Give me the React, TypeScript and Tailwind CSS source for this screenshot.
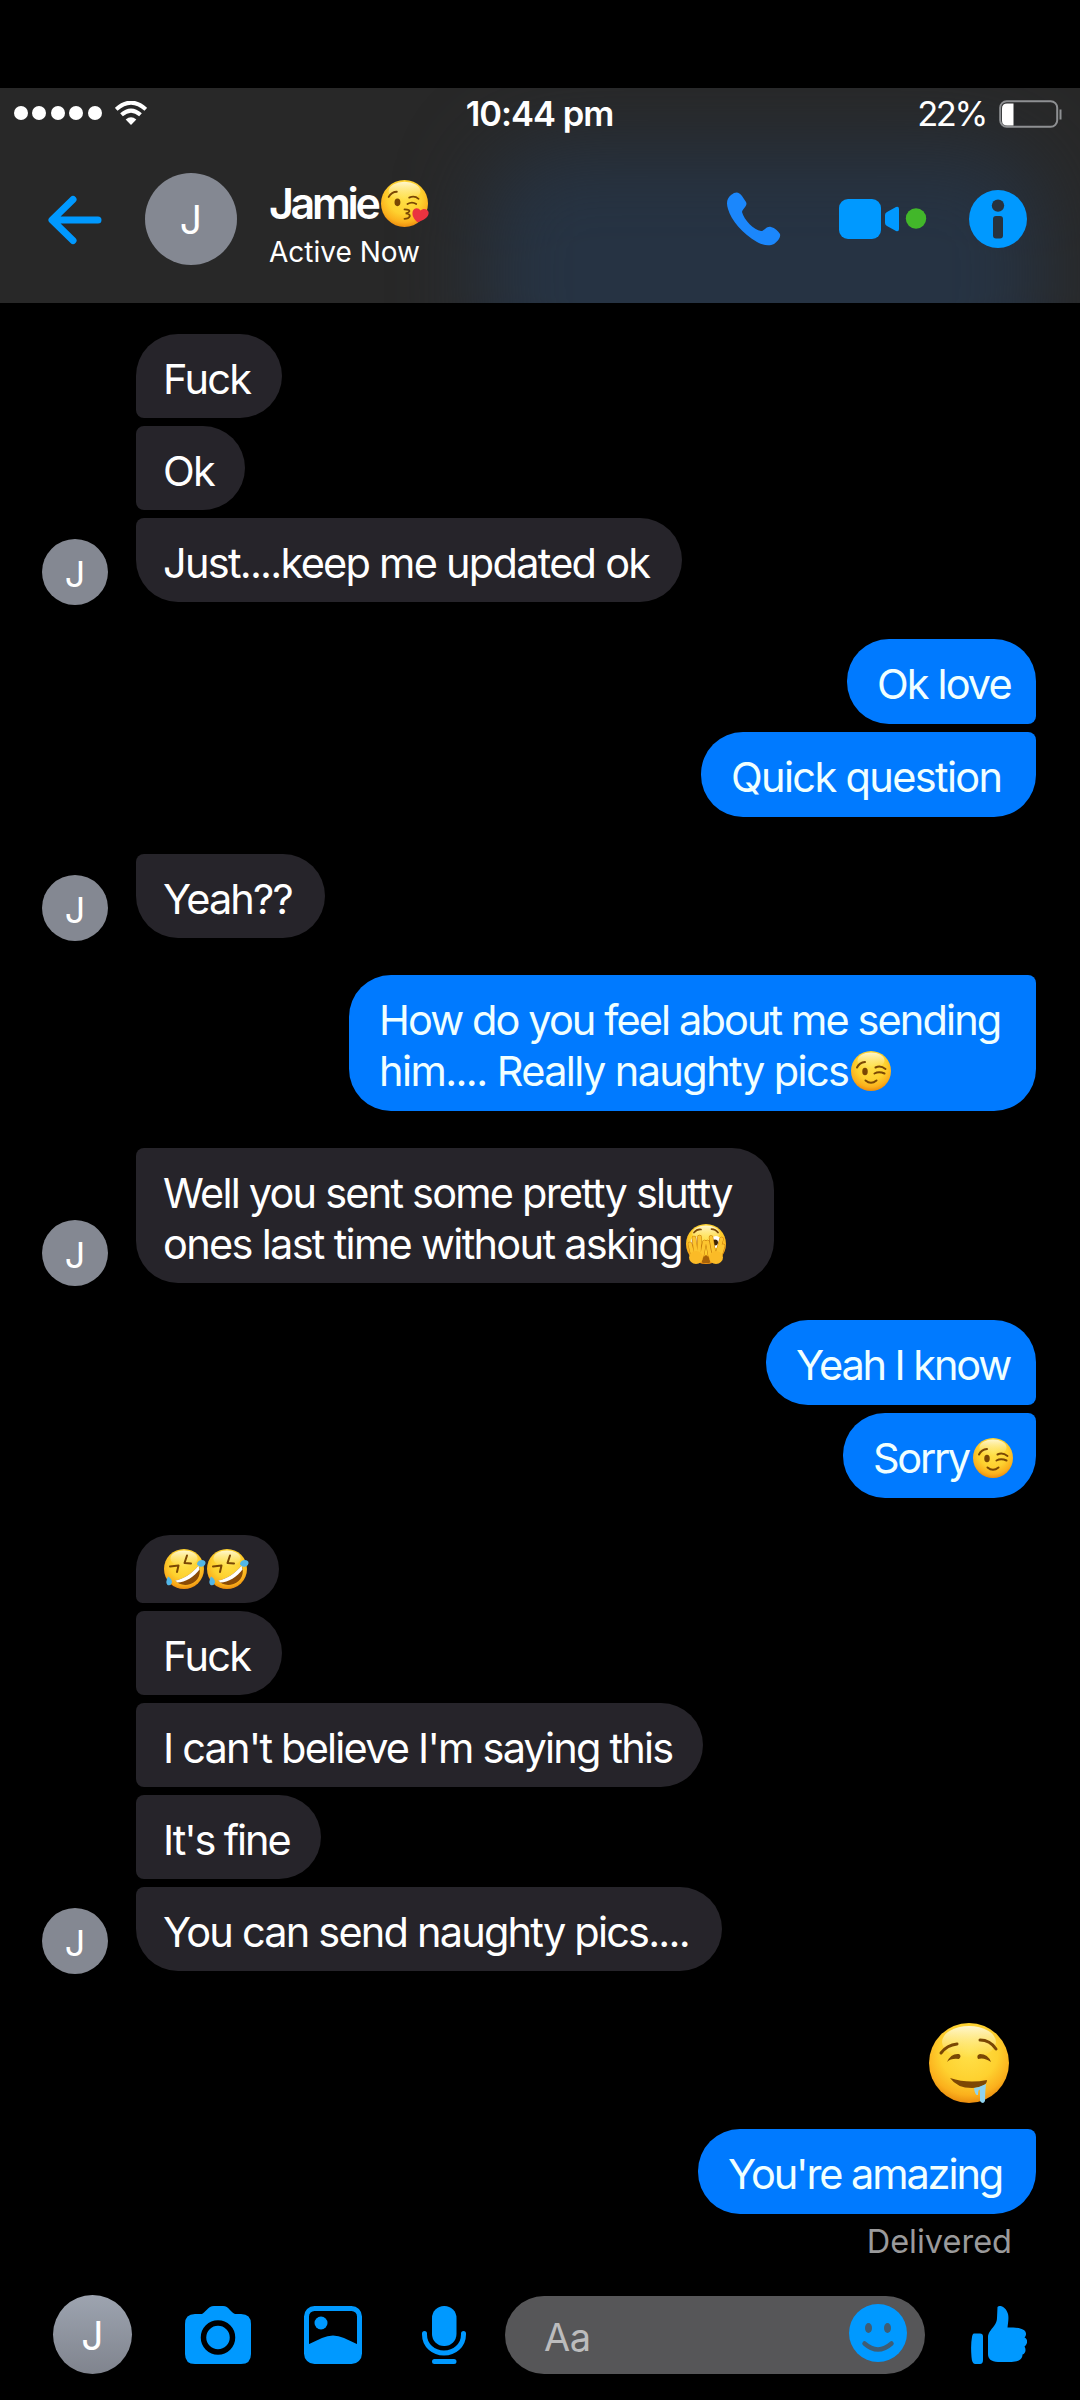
import type { ReactNode } from "react";
import clsx from "clsx";

type EmojiName = "kiss" | "wink" | "peek" | "rofl" | "drool";

interface Message {
  text: ReactNode;
  // width and tracking of the bubble
  size: string;
  first?: boolean;
  last?: boolean;
  pad?: string;
}

interface Group {
  from: "them" | "me";
  className: string;
  messages: Message[];
}

function Emoji({ name, className }: { name: EmojiName; className: string }) {
  return (
    <svg viewBox="0 0 80 80" role="img" aria-label={name} className={clsx("inline-block overflow-visible", className)}>
      <defs>
        <radialGradient id="face" cx="0.5" cy="0.36" r="0.66">
          <stop offset="0" stopColor="#ffe14a" />
          <stop offset="0.55" stopColor="#fed12f" />
          <stop offset="0.82" stopColor="#fbb01c" />
          <stop offset="1" stopColor="#e8860c" />
        </radialGradient>
        <linearGradient id="shine" x1="0" y1="0" x2="0" y2="1">
          <stop offset="0" stopColor="#fffbe0" stopOpacity="0.9" />
          <stop offset="1" stopColor="#fff3a0" stopOpacity="0" />
        </linearGradient>
      </defs>
      <circle cx="40" cy="40" r="40" fill="url(#face)" />
      <ellipse cx="40" cy="19" rx="27" ry="16" fill="url(#shine)" />
      {name === "wink" && (
        <g fill="none" stroke="#7a4704" strokeWidth="4" strokeLinecap="round">
          <path d="M12 33q5-10 16-11M49 33q10-5 20 3M47 45q9-5 20 0" />
          <path d="M29 59q11 9 22 0" />
          <ellipse cx="28" cy="41" rx="3.5" ry="5.5" fill="#7a4704" />
        </g>
      )}
      {name === "kiss" && (
        <>
          <g fill="none" stroke="#7a4704" strokeWidth="3" strokeLinecap="round">
            <path d="M13 29q5-9 14-9M48 30q9-4 16 2M45 41q8-5 15 0" />
            <path d="M40 50q10 0 8 4-1 2-6 3 8 1 7 5-2 4-9 4" />
            <ellipse cx="28" cy="38" rx="3.5" ry="5" fill="#7a4704" />
          </g>
          <path d="M62 72C56 66 52 60 54 53c2-6 10-7 13-1 5-5 13-3 14 3 1 8-8 14-19 17z" fill="#ea3340" />
        </>
      )}
      {name === "rofl" && (
        <>
          <g fill="none" stroke="#7a4704" strokeWidth="4" strokeLinejoin="round" strokeLinecap="round">
            <path d="M12 35l17-2-3 13M46 13l-5 15 13 1" />
          </g>
          <path d="M22 63C38 61 58 48 69 33c7 14 0 32-16 37-12 4-24 1-31-7z" fill="#8a4b06" />
          <path d="M22 63C38 61 58 48 69 33l2 8C61 55 42 67 27 67z" fill="#fff" />
          <path d="M66 31q0-8 9-9 9 0 8 7-3 8-12 6zM8 55q8 4 8 12-2 7-9 5-5-5 1-17z" fill="#53b7e8" />
        </>
      )}
      {name === "drool" && (
        <>
          <g fill="none" stroke="#7a4704" strokeWidth="3" strokeLinecap="round">
            <path d="M12 30q6-8 16-9M51 17q10 0 16 9" />
          </g>
          <path d="M18 39q4-9 12-8 3 2 0 5-8-1-12 3zM49 36q-2-4 2-5 8 0 11 8-7-5-13-3z" fill="#7a4704" />
          <path d="M21 55q18 6 37 2 0 7-15 8-15 0-22-10z" fill="#7d4804" />
          <path d="M45 65q6-1 12-4-1 8-1 17-2 4-5 0v-11q-2-1-2 5-3 1-4-7z" fill="#8fd3ee" />
        </>
      )}
      {name === "peek" && (
        <>
          <path d="M16 17q6-7 14-6M51 10q8 0 13 7" fill="none" stroke="#7a4704" strokeWidth="3.5" strokeLinecap="round" />
          <path d="M30 70l10-8 10 8-3 8H33z" fill="#a86208" />
          <ellipse cx="18" cy="36" rx="9" ry="11" fill="#f3e3bd" />
          <ellipse cx="60" cy="36" rx="11" ry="12" fill="#fff" />
          <circle cx="58" cy="37" r="6" fill="#3f2504" />
          <g fill="none" strokeLinecap="round">
            <path d="M14 64L8 40M20 60l-4-32M26 60l1-34M32 63l5-27M48 63l-5-27M56 60l-6-33M62 62l9-32M68 64l6-20" stroke="#c67a0b" strokeWidth="9" />
            <path d="M14 64L8 40M20 60l-4-32M26 60l1-34M32 63l5-27M48 63l-5-27M56 60l-6-33M62 62l9-32M68 64l6-20" stroke="#fdc52f" strokeWidth="7" />
          </g>
          <ellipse cx="20" cy="67" rx="14" ry="13" fill="#fbbb27" />
          <ellipse cx="60" cy="67" rx="14" ry="13" fill="#fbbb27" />
        </>
      )}
    </svg>
  );
}

function Avatar({ className }: { className?: string }) {
  return (
    <div className={clsx("flex shrink-0 items-center justify-center rounded-full bg-[#848892] text-white", className)}>
      J
    </div>
  );
}

const inlineEmoji = "size-10 align-[-5px]";

const groups: Group[] = [
  {
    from: "them",
    className: "mt-[31px]",
    messages: [
      { text: "Fuck", size: "w-[146px] tracking-[-1.7px]", first: true },
      { text: "Ok", size: "w-[109px] tracking-[-1.7px]" },
      { text: "Just....keep me updated ok", size: "w-[546px] tracking-[-1.75px]", last: true },
    ],
  },
  {
    from: "me",
    className: "mt-[37px]",
    messages: [
      { text: "Ok love", size: "w-[189px] tracking-[-1.9px]", first: true },
      { text: "Quick question", size: "w-[335px] tracking-[-1.65px]", last: true },
    ],
  },
  {
    from: "them",
    className: "mt-[37px]",
    messages: [{ text: "Yeah??", size: "w-[189px] tracking-[-1.85px]", last: true }],
  },
  {
    from: "me",
    className: "mt-[37px]",
    messages: [
      {
        text: (
          <>
            How do you feel about me sending
            <br />
            <span className="tracking-[-1.6px]">him.... Really naughty pics</span>
            <Emoji name="wink" className={clsx(inlineEmoji, "ml-[3px]")} />
          </>
        ),
        size: "w-[687px] tracking-[-1.9px]",
        last: true,
      },
    ],
  },
  {
    from: "them",
    className: "mt-[37px]",
    messages: [
      {
        text: (
          <>
            Well you sent some pretty slutty
            <br />
            <span className="tracking-[-1.7px]">ones last time without asking</span>
            <Emoji name="peek" className={clsx(inlineEmoji, "ml-[4px]")} />
          </>
        ),
        size: "w-[638px] tracking-[-1.8px]",
        last: true,
      },
    ],
  },
  {
    from: "me",
    className: "mt-[37px]",
    messages: [
      { text: "Yeah I know", size: "w-[270px] tracking-[-2.1px]", first: true },
      {
        text: (
          <>
            Sorry
            <Emoji name="wink" className={clsx(inlineEmoji, "ml-[4px]")} />
          </>
        ),
        size: "w-[193px] tracking-[-2.3px]",
        last: true,
      },
    ],
  },
  {
    from: "them",
    className: "mt-[37px]",
    messages: [
      {
        text: (
          <span className="flex gap-[3px] pl-px">
            <Emoji name="rofl" className="size-10" />
            <Emoji name="rofl" className="size-10" />
          </span>
        ),
        size: "w-[143px]",
        pad: "pt-[14px] pb-[14px]",
        first: true,
      },
      { text: "Fuck", size: "w-[146px] tracking-[-1.7px]" },
      { text: "I can't believe I'm saying this", size: "w-[567px] tracking-[-1.8px]" },
      { text: "It's fine", size: "w-[185px] tracking-[-2.1px]" },
      { text: "You can send naughty pics....", size: "w-[586px] tracking-[-1.8px]", last: true },
    ],
  },
];

function Bubble({ message, mine }: { message: Message; mine: boolean }) {
  return (
    <div
      className={clsx(
        "text-[41.5px] leading-[51px] whitespace-nowrap",
        message.size,
        message.pad ?? (mine ? "pt-[20px] pb-[14px]" : "pt-[20px] pb-[13px]"),
        mine
          ? "rounded-l-[42px] bg-[#007aff] pl-[30px] text-[#f0ffff]"
          : "rounded-r-[42px] bg-[#26242a] pl-[27px] text-white",
        mine && (message.first ? "rounded-tr-[42px]" : "rounded-tr-lg"),
        mine && (message.last ? "rounded-br-[42px]" : "rounded-br-lg"),
        !mine && (message.first ? "rounded-tl-[42px]" : "rounded-tl-lg"),
        !mine && (message.last ? "rounded-bl-[42px]" : "rounded-bl-lg")
      )}
    >
      {message.text}
    </div>
  );
}

function MessageGroup({ group }: { group: Group }) {
  const mine = group.from === "me";
  return (
    <section className={clsx("flex", mine && "justify-end", group.className)}>
      {!mine && <Avatar className="mr-[28px] -mb-[3px] size-[66px] self-end pt-[3px] text-[36px]" />}
      <div className={clsx("flex flex-col gap-2", mine && "items-end")}>
        {group.messages.map((message, i) => (
          <Bubble key={i} message={message} mine={mine} />
        ))}
      </div>
    </section>
  );
}

function StatusBar() {
  return (
    <div className="flex h-[50px] items-center pt-[2px] pr-[18px] pl-[14px]">
      <div className="flex flex-1 items-center gap-[4.4px] pb-[2px]">
        {[0, 1, 2, 3, 4].map((dot) => (
          <span key={dot} className="size-[14px] rounded-full bg-white" />
        ))}
        <svg viewBox="0 0 32 24" className="ml-[9px] h-6 w-8" fill="none" stroke="#fff" strokeWidth="4">
          <path d="M1.2 8.3Q16-5 30.8 8.3" />
          <path d="M6.5 13.8q9.5-8.5 19 0" />
          <path d="M16 24l-5.3-5.5q5.3-4.3 10.6 0z" fill="#fff" stroke="none" />
        </svg>
      </div>
      <span className="pl-[3px] text-[34.5px] font-semibold tracking-[-1px]">10:44 pm</span>
      <div className="flex flex-1 items-center justify-end">
        <span className="text-[34.5px] tracking-[-2.4px]">22%</span>
        <svg viewBox="0 0 63 28" className="ml-[13px] h-7 w-[63px]">
          <rect x="1.2" y="1.2" width="57" height="25.6" rx="6.5" fill="none" stroke="#8e9093" strokeWidth="2" />
          <path d="M8 3.5h6.5v22H8q-5 0-5-5v-12q0-5 5-5z" fill="#fff" />
          <path d="M61.5 9.5v10" stroke="#8e9093" strokeWidth="2" />
        </svg>
      </div>
    </div>
  );
}

function Header() {
  return (
    <header className="relative h-[215px] overflow-hidden bg-[#282828]">
      <div className="absolute top-[60px] right-[40px] -bottom-24 left-[485px] rounded-[70px] bg-[#263343] blur-[42px]" />
      <div className="relative">
        <StatusBar />
        <div className="flex h-[162px] items-center pl-[48px]">
          <svg viewBox="0 0 54 50" className="mt-[2px] h-[50px] w-[54px]" fill="none" stroke="#0099ff" strokeWidth="7" strokeLinecap="round" strokeLinejoin="round">
            <path d="M25 4.5L4 25l21 20.5M6 25h44" />
          </svg>
          <Avatar className="ml-[43px] size-[92px] pt-[3px] text-[39px]" />
          <div className="ml-[32px] w-[301px] pt-[9px]">
            <div className="flex items-center text-[43px] leading-[50px] font-semibold tracking-[-3.3px]">
              Jamie
              <Emoji name="kiss" className="ml-[3px] size-[47px]" />
            </div>
            <div className="mt-[7px] text-[28px] leading-[34px]">Active Now</div>
          </div>
          <svg viewBox="0 0 54 54" className="ml-[157px] h-[54px] w-[54px]" fill="#1b87fc">
            <path d="M4 3C9-1 12 0 15 4l4 6c2 4-3 6-4 10 2 8 12 18 19 19 4 0 5-5 10-4 4 1 7 4 9 7 1 4-3 8-6 10-4 2-10 2-17-2C16 42 4 28 1 17-1 11 0 6 4 3z" />
          </svg>
          <svg viewBox="0 0 88 42" className="ml-[58px] h-[42px] w-[88px]">
            <rect x="0" y="1" width="42" height="40" rx="9" fill="#0099ff" />
            <path d="M48 14l9-5q3-1 3 2v20q0 3-3 2l-9-5q-2-1-2-3v-8q0-2 2-3z" fill="#0099ff" />
            <circle cx="77" cy="20.5" r="10.2" fill="#42b72a" />
          </svg>
          <svg viewBox="0 0 58 58" className="ml-[42px] size-[58px]">
            <circle cx="29" cy="29" r="29" fill="#0099ff" />
            <g fill="#27323e">
              <circle cx="29" cy="15.6" r="6.2" />
              <rect x="24" y="26" width="10" height="22.5" rx="3" />
            </g>
          </svg>
        </div>
      </div>
    </header>
  );
}

function Composer() {
  return (
    <footer className="flex h-[79px] items-center pl-[53px] text-[#0099ff]">
      <div className="flex size-[79px] items-center justify-center rounded-full bg-linear-to-b from-[#9da4b0] to-[#80848e] pt-[3px] text-[39px] text-white">
        J
      </div>
      <svg viewBox="0 0 66 58" className="ml-[53px] h-[58px] w-[66px]" fill="currentColor">
        <path d="M10 8h7c3-1 6-8 12-8h9c6 0 8 7 12 8h6q10 0 10 10v30q0 10-10 10H10Q0 58 0 48V18Q0 8 10 8z" />
        <circle cx="33" cy="31.5" r="14.5" fill="none" stroke="#000" strokeWidth="5.5" />
      </svg>
      <svg viewBox="0 0 58 58" className="ml-[53px] size-[58px]">
        <rect x="2.5" y="2.5" width="53" height="53" rx="8" fill="none" stroke="currentColor" strokeWidth="5" />
        <path d="M3 39l15-7q11-5 22 0l15 7v11q0 6-6 6H9q-6 0-6-6z" fill="currentColor" />
        <circle cx="17" cy="17" r="6.5" fill="currentColor" />
      </svg>
      <svg viewBox="0 0 44 58" className="ml-[60px] h-[58px] w-[44px]" fill="none" stroke="currentColor" strokeWidth="5" strokeLinecap="round">
        <rect x="10" y="0" width="24.5" height="40" rx="12" fill="currentColor" stroke="none" />
        <path d="M2.5 27.5v1c0 11 9 18.5 19.5 18.5s19.5-7.5 19.5-18.5v-1M12.5 55.5h19.5" />
      </svg>
      <div className="ml-[39px] flex h-[78px] w-[420px] items-center justify-between rounded-full bg-[#565658] pr-[18px] pl-[39px]">
        <span className="pt-[6px] text-[38px] tracking-[-0.5px] text-[#bcbcbd]">Aa</span>
        <svg viewBox="0 0 58 58" className="mb-[3px] size-[58px]">
          <circle cx="29" cy="29" r="29" fill="currentColor" />
          <ellipse cx="19.5" cy="24" rx="3.5" ry="5" fill="#3f5d74" />
          <ellipse cx="38.5" cy="24" rx="3.5" ry="5" fill="#3f5d74" />
          <path d="M15.5 39.5q13.500 12 27 0" fill="none" stroke="#3f5d74" strokeWidth="4.5" strokeLinecap="round" />
        </svg>
      </div>
      <svg viewBox="0 0 56 58" className="ml-[46px] h-[58px] w-[56px]" fill="currentColor">
        <path d="M3 27.5h6q3 0 3 3V54q0 4-3 4H4q-3 0-3.500-7-1-12 .5-20 .5-3.500 2-3.500z" />
        <path d="M26.500 1c3-3 9 1 10.500 7 1 4 0 9-.5 13.500 8 0 14 .5 17 3 2 2 2 5 0 7 4 2 3 7 0 9 2 3 1 7-2 8 0 5-4 7-11 7.500H27c-7-.5-10-3-10-8V31c0-4 3-7 6-11 2-3 3-5 3-8z" />
      </svg>
    </footer>
  );
}

export default function App() {
  return (
    <main className="h-[2400px] w-[1080px] overflow-hidden bg-black pt-[88px] font-['Inter','Liberation_Sans',sans-serif] text-white">
      <Header />
      <div className="flex h-[1992px] flex-col pr-[44px] pl-[42px]">
        {groups.map((group, i) => (
          <MessageGroup key={i} group={group} />
        ))}
        <section className="mt-[52px] flex flex-col items-end">
          <Emoji name="drool" className="mr-[27px] size-[80px]" />
          <div className="mt-[26px]">
            <Bubble message={{ text: "You're amazing", size: "w-[338px] tracking-[-2.1px]", last: true }} mine />
          </div>
          <span className="mt-[8px] mr-[24px] text-[32.5px] leading-10 text-[#9a9a9b]">Delivered</span>
        </section>
      </div>
      <Composer />
    </main>
  );
}
